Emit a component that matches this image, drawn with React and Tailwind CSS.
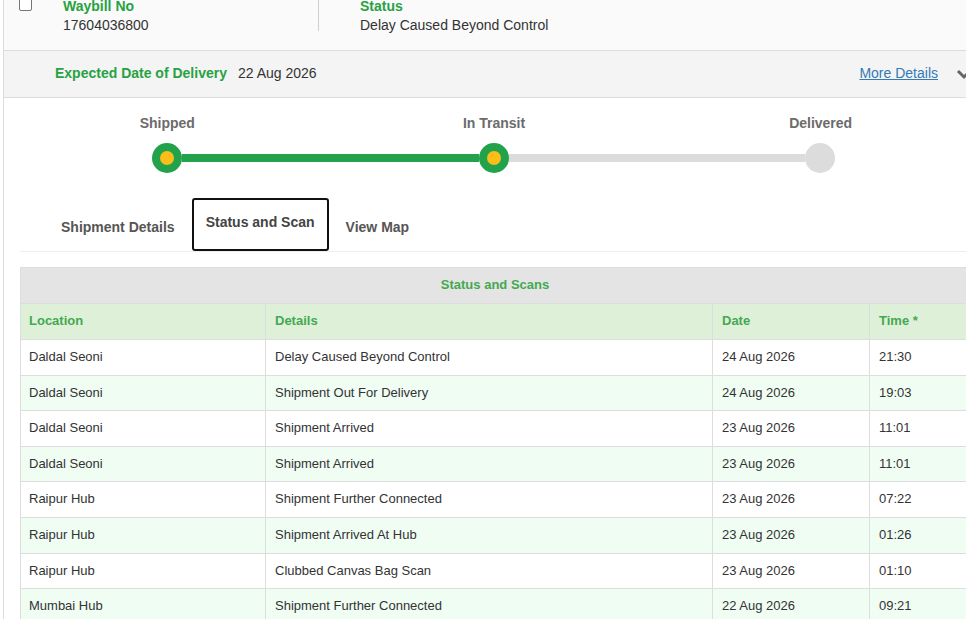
import React from "react";

const rows = [
  ["Daldal Seoni", "Delay Caused Beyond Control", "24 Aug 2026", "21:30"],
  ["Daldal Seoni", "Shipment Out For Delivery", "24 Aug 2026", "19:03"],
  ["Daldal Seoni", "Shipment Arrived", "23 Aug 2026", "11:01"],
  ["Daldal Seoni", "Shipment Arrived", "23 Aug 2026", "11:01"],
  ["Raipur Hub", "Shipment Further Connected", "23 Aug 2026", "07:22"],
  ["Raipur Hub", "Shipment Arrived At Hub", "23 Aug 2026", "01:26"],
  ["Raipur Hub", "Clubbed Canvas Bag Scan", "23 Aug 2026", "01:10"],
  ["Mumbai Hub", "Shipment Further Connected", "22 Aug 2026", "09:21"],
  ["Mumbai Hub", "Shipment Arrived At Hub", "22 Aug 2026", "04:12"],
];

function Dot({ active }) {
  if (!active) {
    return <div className="w-[30px] h-[30px] rounded-full bg-[#dcdcdc] shrink-0" />;
  }
  return (
    <div className="w-[30px] h-[30px] rounded-full bg-[#21a24b] shrink-0 flex items-center justify-center">
      <div className="w-[14px] h-[14px] rounded-full bg-[#fbbd19]" />
    </div>
  );
}

export default function App() {
  return (
    <div className="w-[966px] h-[619px] overflow-hidden bg-white font-['Liberation_Sans',Arial,sans-serif] text-[14px] text-[#333]">
      <div className="ml-[3px] w-[981px] border-l border-[#dcdcdc] min-h-[619px]">
        {/* top */}
        <div className="h-[51px] bg-[#fafafa] border-b border-[#dcdcdc] flex items-start overflow-hidden">
          <div className="ml-[15px] -mt-[2px] w-[13px] h-[13px] border border-[#767676] rounded-[2px] bg-white shrink-0" />
          <div className="ml-[31px] w-[256px] h-[31px] border-r border-[#cfcfcf]">
            <div className="-mt-[3px] leading-[19px]">
              <div className="font-bold text-[#27a243]">Waybill No</div>
              <div>17604036800</div>
            </div>
          </div>
          <div className="pl-[41px]">
            <div className="-mt-[3px] leading-[19px]">
              <div className="font-bold text-[#27a243]">Status</div>
              <div>Delay Caused Beyond Control</div>
            </div>
          </div>
        </div>

        {/* expected */}
        <div className="h-[47px] bg-[#f4f4f4] border-b border-[#dcdcdc] flex items-center pl-[51px] pb-[2px]">
          <span className="font-bold text-[#27a243]">Expected Date of Delivery</span>
          <span className="ml-[11px]">22 Aug 2026</span>
          <a className="ml-auto text-[#337ab7] underline mr-[18px]" href="#">More Details</a>
          <svg width="16" height="12" viewBox="0 0 16 12" className="mr-[12px] mt-[2px]">
            <polyline points="2,3 8,9 14,3" fill="none" stroke="#666" strokeWidth="3" />
          </svg>
        </div>

        {/* progress */}
        <div className="pt-[17px]">
          <div className="grid grid-cols-3 font-bold text-[#6b6b6b] leading-[16px]">
            <div className="text-center">Shipped</div>
            <div className="text-center">In Transit</div>
            <div className="text-center">Delivered</div>
          </div>
          <div className="mt-[12px] flex items-center pl-[148px] pr-[149px]">
            <Dot active />
            <div className="flex-1 h-[8px] bg-[#21a24b]" />
            <Dot active />
            <div className="flex-1 h-[8px] bg-[#dcdcdc]" />
            <Dot />
          </div>
        </div>

        {/* tabs */}
        <div className="mx-[16px] mt-[25px] flex items-end border-b border-[#eeeeee] h-[54px] text-[14px] font-bold">
          <div className="ml-[22px] pl-[19px] pr-[17px] pb-[16px] leading-[16px] text-[#555]">Shipment Details</div>
          <div className="w-[137px] h-[53px] border-2 border-[#111] rounded-[3px] pt-[14px] text-center leading-[16px] text-[#444]">
            Status and Scan
          </div>
          <div className="px-[17px] pb-[16px] leading-[16px] text-[#555]">View Map</div>
        </div>

        {/* table */}
        <div className="mx-[16px] mt-[15px]">
          <table className="w-[949px] table-fixed border-collapse text-[13px] leading-[18.57px]">
            <colgroup>
              <col className="w-[245px]" />
              <col className="w-[447px]" />
              <col className="w-[157px]" />
              <col className="w-[100px]" />
            </colgroup>
            <thead>
              <tr className="bg-[#e4e4e4]">
                <th colSpan={4} className="border border-[#dddddd] py-[8px] text-center font-bold text-[#43a951]">
                  Status and Scans
                </th>
              </tr>
              <tr className="bg-[#dff0d8]">
                <th className="border border-[#dddddd] px-[8px] pt-[8px] pb-[9px] text-left font-bold text-[#43a951]">Location</th>
                <th className="border border-[#dddddd] px-[9px] pt-[8px] pb-[9px] text-left font-bold text-[#43a951]">Details</th>
                <th className="border border-[#dddddd] px-[9px] pt-[8px] pb-[9px] text-left font-bold text-[#43a951]">Date</th>
                <th className="border border-[#dddddd] px-[9px] pt-[8px] pb-[9px] text-left font-bold text-[#43a951]">Time *</th>
              </tr>
            </thead>
            <tbody>
              {rows.map((r, i) => (
                <tr key={i} className={i % 2 === 1 ? "bg-[#f0fdf3]" : "bg-white"}>
                  <td className="border border-[#dddddd] px-[8px] py-[8px]">{r[0]}</td>
                  <td className="border border-[#dddddd] px-[9px] py-[8px]">{r[1]}</td>
                  <td className="border border-[#dddddd] px-[9px] py-[8px]">{r[2]}</td>
                  <td className="border border-[#dddddd] px-[9px] py-[8px]">{r[3]}</td>
                </tr>
              ))}
            </tbody>
          </table>
        </div>
      </div>
    </div>
  );
}
